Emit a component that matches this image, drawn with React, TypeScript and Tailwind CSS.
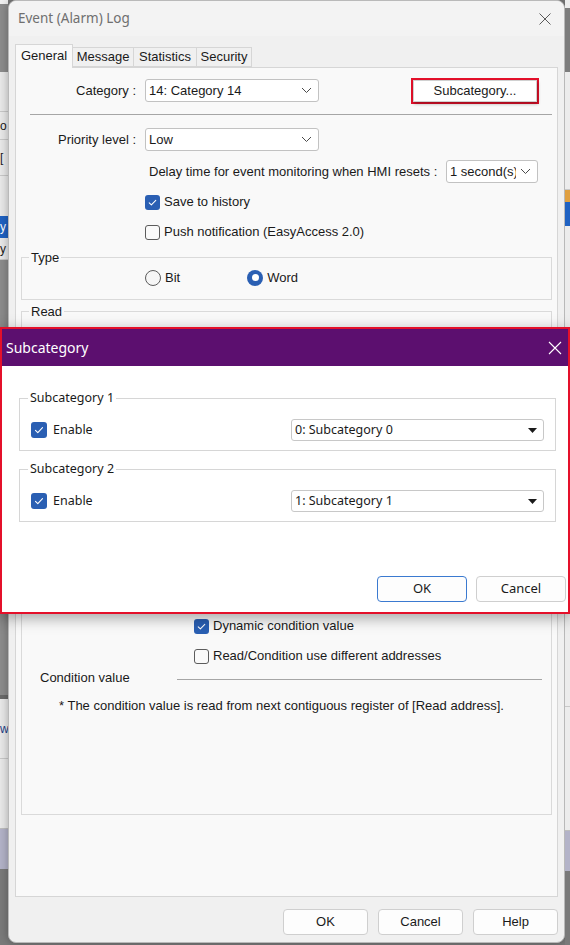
import React from 'react'

const WIN = { fontFamily: '"Liberation Sans", Arial, sans-serif' }
const UI = { fontFamily: '"Noto Sans", "Open Sans", sans-serif' }

function Tick({ size = 15 }: { size?: number }) {
  return (
    <svg width={size} height={size} viewBox="0 0 16 16" fill="none">
      <path d="M4.5 8.3l2.3 2.3 4.7-4.9" stroke="#ffffff" strokeWidth="1.1" strokeLinecap="round" strokeLinejoin="round" />
    </svg>
  )
}

function CheckBox({ checked }: { checked?: boolean }) {
  if (checked) {
    return (
      <span className="flex h-[15px] w-[15px] shrink-0 items-center justify-center rounded-[3px] bg-[#2a5fb3]">
        <Tick />
      </span>
    )
  }
  return <span className="block h-[15px] w-[15px] shrink-0 rounded-[3px] border border-[#5c5c5c] bg-[#fafafa]" />
}

function Radio({ checked }: { checked?: boolean }) {
  if (checked) {
    return (
      <span className="flex h-[16px] w-[16px] shrink-0 items-center justify-center rounded-full bg-[#2a5fb3]">
        <span className="block h-[7px] w-[7px] rounded-full bg-white" />
      </span>
    )
  }
  return <span className="block h-[16px] w-[16px] shrink-0 rounded-full border border-[#5c5c5c] bg-[#f6f6f6]" />
}

function Chevron() {
  return (
    <svg width="11" height="7" viewBox="0 0 11 7" fill="none">
      <path d="M1 1l4.5 4.5L10 1" stroke="#4a4a4a" strokeWidth="1" />
    </svg>
  )
}

function Combo({ value, width }: { value: string; width: string }) {
  return (
    <div className={`${width} flex h-[23px] items-center justify-between rounded-[3px] border border-[#c2c2c2] bg-white pl-[3px] pr-[6px]`}>
      <span>{value}</span>
      <Chevron />
    </div>
  )
}

function SubSelect({ value }: { value: string }) {
  return (
    <div className="flex h-[22px] w-[253px] items-center justify-between rounded-[3px] border border-[#c8c8c8] bg-white pl-[3px] pr-[6px]">
      <span>{value}</span>
      <svg width="9" height="5" viewBox="0 0 9 5">
        <polygon points="0,0 9,0 4.5,5" fill="#1a1a1a" />
      </svg>
    </div>
  )
}

function SubGroup({ title, value }: { title: string; value: string }) {
  return (
    <fieldset className="mx-[17px] mr-[12px] h-[61px] border border-[#d6d6d6] px-[11px]">
      <legend className="-ml-[3px] px-[2px] leading-[16px]">{title}</legend>
      <div className="mt-[13px] flex items-center">
        <span className="flex h-[16px] w-[16px] items-center justify-center rounded-[3px] bg-[#2a5fb3]">
          <Tick size={16} />
        </span>
        <span className="ml-[6px]">Enable</span>
        <div className="ml-auto">
          <SubSelect value={value} />
        </div>
      </div>
    </fieldset>
  )
}

function SubcategoryDialog() {
  return (
    <div className="absolute left-0 top-[327px] flex h-[287px] w-[570px] flex-col border-2 border-[#e4102a] bg-white text-[12.5px] text-[#1a1a1a] shadow-[0_4px_14px_rgba(0,0,0,0.35)]" style={UI}>
      <div className="flex h-[37px] items-center justify-between bg-[#5c0f6f] pl-[4px] pr-[6px] text-white">
        <span className="text-[14px]">Subcategory</span>
        <svg width="14" height="14" viewBox="0 0 14 14" fill="none">
          <path d="M1 1l12 12M13 1L1 13" stroke="#ffffff" strokeWidth="1.1" />
        </svg>
      </div>
      <div className="flex flex-1 flex-col pt-[24px]">
        <SubGroup title="Subcategory 1" value="0: Subcategory 0" />
        <div className="h-[10px]" />
        <SubGroup title="Subcategory 2" value="1: Subcategory 1" />
        <div className="mt-auto mb-[10px] mr-[2px] flex justify-end gap-[9px] text-[13px]">
          <button className="h-[26px] w-[90px] rounded-[4px] border border-[#3b7ad0] bg-[#fdfdfd]">OK</button>
          <button className="h-[26px] w-[90px] rounded-[4px] border border-[#cfcfcf] bg-[#fdfdfd]">Cancel</button>
        </div>
      </div>
    </div>
  )
}

function LeftStrip() {
  return (
    <div className="flex w-[8px] shrink-0 flex-col overflow-hidden bg-[#e9e9e9] text-[12px] leading-none" style={WIN}>
      <div className="h-[4px] bg-[#f0f0f0]" />
      <div className="h-[68px] bg-[#8c8c8c]" />
      <div className="h-[40px] border-b border-[#c8c8c8]" />
      <div className="flex h-[28px] items-center border-b border-[#c8c8c8]">o</div>
      <div className="flex h-[36px] items-center border-b border-[#c8c8c8]">[</div>
      <div className="h-[40px]" />
      <div className="flex h-[22px] items-center bg-[#1f62c2] text-white">y</div>
      <div className="flex h-[22px] items-center border-b border-[#c8c8c8]">y</div>
      <div className="h-[435px] bg-[#8c8c8c]" />
      <div className="h-[4px] bg-[#6a6a6a]" />
      <div className="flex h-[60px] items-center border-b border-[#c8c8c8] text-[#1b3d86]">w</div>
      <div className="h-[70px] border-b border-[#bdbdbd]" />
      <div className="h-[40px] bg-[#b3b3c8]" />
      <div className="flex-1 bg-[#7a7a7a]" />
    </div>
  )
}

function RightStrip() {
  return (
    <div className="flex w-[5px] shrink-0 flex-col overflow-hidden bg-[#ececec]">
      <div className="h-[8px]" />
      <div className="h-[64px] bg-[#7d7d7d]" />
      <div className="h-[118px] border-b border-[#c8c8c8]" />
      <div className="h-[12px] bg-[#e0a040]" />
      <div className="h-[24px] bg-[#1f62c2]" />
      <div className="h-[480px]" />
      <div className="h-[25px] border-t border-[#c8c8c8]" />
      <div className="h-[100px] border-b border-[#bdbdbd]" />
      <div className="h-[40px] bg-[#b3b3c8]" />
      <div className="flex-1 bg-[#7a7a7a]" />
    </div>
  )
}

export default function App() {
  return (
    <div className="relative flex h-[945px] w-[570px] overflow-hidden bg-[#7a7a7a] text-[13px] text-[#1a1a1a]" style={WIN}>
      <LeftStrip />

      <div className="flex h-[943px] w-[557px] shrink-0 flex-col rounded-[8px] border border-[#b9b9b9] bg-[#f0f0f0] shadow-[0_0_10px_rgba(0,0,0,0.3)]">
        {/* title bar */}
        <div className="flex h-[35px] items-center justify-between rounded-t-[8px] bg-[#f3f3f3] pl-[9px] pr-[13px]">
          <span className="text-[13.5px] text-[#6f6f6f]" style={UI}>Event (Alarm) Log</span>
          <svg width="12" height="12" viewBox="0 0 12 12" fill="none">
            <path d="M0.5 0.5l11 11M11.5 0.5l-11 11" stroke="#5a5a5a" strokeWidth="1" />
          </svg>
        </div>

        {/* tabs */}
        <div className="ml-[6px] flex h-[31px] items-end">
          <div className="relative z-10 -mb-px flex h-[24px] w-[58px] items-center justify-center border border-b-0 border-[#d6d6d6] bg-[#f9f9f9] pb-[2px]">General</div>
          <div className="flex h-[20px] w-[61px] items-center justify-center border border-l-0 border-[#d6d6d6] bg-[#f0f0f0]">Message</div>
          <div className="flex h-[20px] w-[63px] items-center justify-center border border-l-0 border-[#d6d6d6] bg-[#f0f0f0]">Statistics</div>
          <div className="flex h-[20px] w-[55px] items-center justify-center border border-l-0 border-[#d6d6d6] bg-[#f0f0f0]">Security</div>
        </div>

        {/* tab panel */}
        <div className="mx-[6px] flex h-[830px] flex-col border border-[#d6d6d6] bg-[#f9f9f9]">
          <div className="mt-[11px] flex h-[23px] items-center">
            <span className="w-[129px] pr-[9px] text-right">Category :</span>
            <Combo value="14: Category 14" width="w-[174px]" />
            <div className="ml-[92px] border-2 border-[#e4102a]">
              <button className="flex h-[22px] w-[124px] items-center justify-center border border-[#d0d0d0] bg-white shadow-[1px_2px_3px_rgba(0,0,0,0.3)]">Subcategory...</button>
            </div>
          </div>

          <div className="ml-[14px] mr-[5px] mt-[12px] h-px bg-[#a6a6a6]" />

          <div className="mt-[13px] flex h-[23px] items-center">
            <span className="w-[129px] pr-[9px] text-right">Priority level :</span>
            <Combo value="Low" width="w-[174px]" />
          </div>

          <div className="mt-[9px] flex h-[23px] items-center">
            <span className="ml-[133px]">Delay time for event monitoring when HMI resets :</span>
            <div className="ml-auto mr-[19px] flex h-[23px] w-[92px] items-center justify-between rounded-[3px] border border-[#c2c2c2] bg-white pl-[3px] pr-[6px]">
              <span className="w-[66px] overflow-hidden whitespace-nowrap">1 second(s)</span>
              <Chevron />
            </div>
          </div>

          <div className="ml-[129px] mt-[11px] flex h-[16px] items-center gap-[4px]">
            <CheckBox checked />
            <span>Save to history</span>
          </div>
          <div className="ml-[129px] mt-[14px] flex h-[16px] items-center gap-[4px]">
            <CheckBox />
            <span>Push notification (EasyAccess 2.0)</span>
          </div>

          <fieldset className="ml-[5px] mr-[5px] mt-[10px] h-[50px] border border-[#dadada]">
            <legend className="ml-[7px] px-[2px] leading-[15px]">Type</legend>
            <div className="mt-[3px] flex items-center">
              <span className="ml-[123px] flex items-center gap-[4px]">
                <Radio />
                Bit
              </span>
              <span className="ml-[67px] flex items-center gap-[4px]">
                <Radio checked />
                Word
              </span>
            </div>
          </fieldset>

          <fieldset className="ml-[5px] mr-[5px] mt-[4px] h-[511px] border border-[#dadada]">
            <legend className="ml-[7px] px-[2px] leading-[15px]">Read</legend>
            <div className="h-[299px]" />
            <div className="ml-[172px] flex h-[16px] items-center gap-[4px]">
              <CheckBox checked />
              <span>Dynamic condition value</span>
            </div>
            <div className="ml-[172px] mt-[14px] flex h-[16px] items-center gap-[4px]">
              <CheckBox />
              <span>Read/Condition use different addresses</span>
            </div>
            <div className="mt-[4px] flex items-center">
              <span className="ml-[18px]">Condition value</span>
              <div className="ml-[47px] mr-[9px] mt-[3px] h-px flex-1 bg-[#a6a6a6]" />
            </div>
            <div className="ml-[37px] mt-[8px]">* The condition value is read from next contiguous register of [Read address].</div>
          </fieldset>
        </div>

        {/* footer buttons */}
        <div className="mr-[6px] mt-[12px] flex justify-end gap-[10px]">
          <button className="h-[26px] w-[85px] rounded-[4px] border border-[#cfcfcf] bg-[#fdfdfd]">OK</button>
          <button className="h-[26px] w-[85px] rounded-[4px] border border-[#cfcfcf] bg-[#fdfdfd]">Cancel</button>
          <button className="h-[26px] w-[85px] rounded-[4px] border border-[#cfcfcf] bg-[#fdfdfd]">Help</button>
        </div>
      </div>

      <RightStrip />

      <SubcategoryDialog />
    </div>
  )
}
